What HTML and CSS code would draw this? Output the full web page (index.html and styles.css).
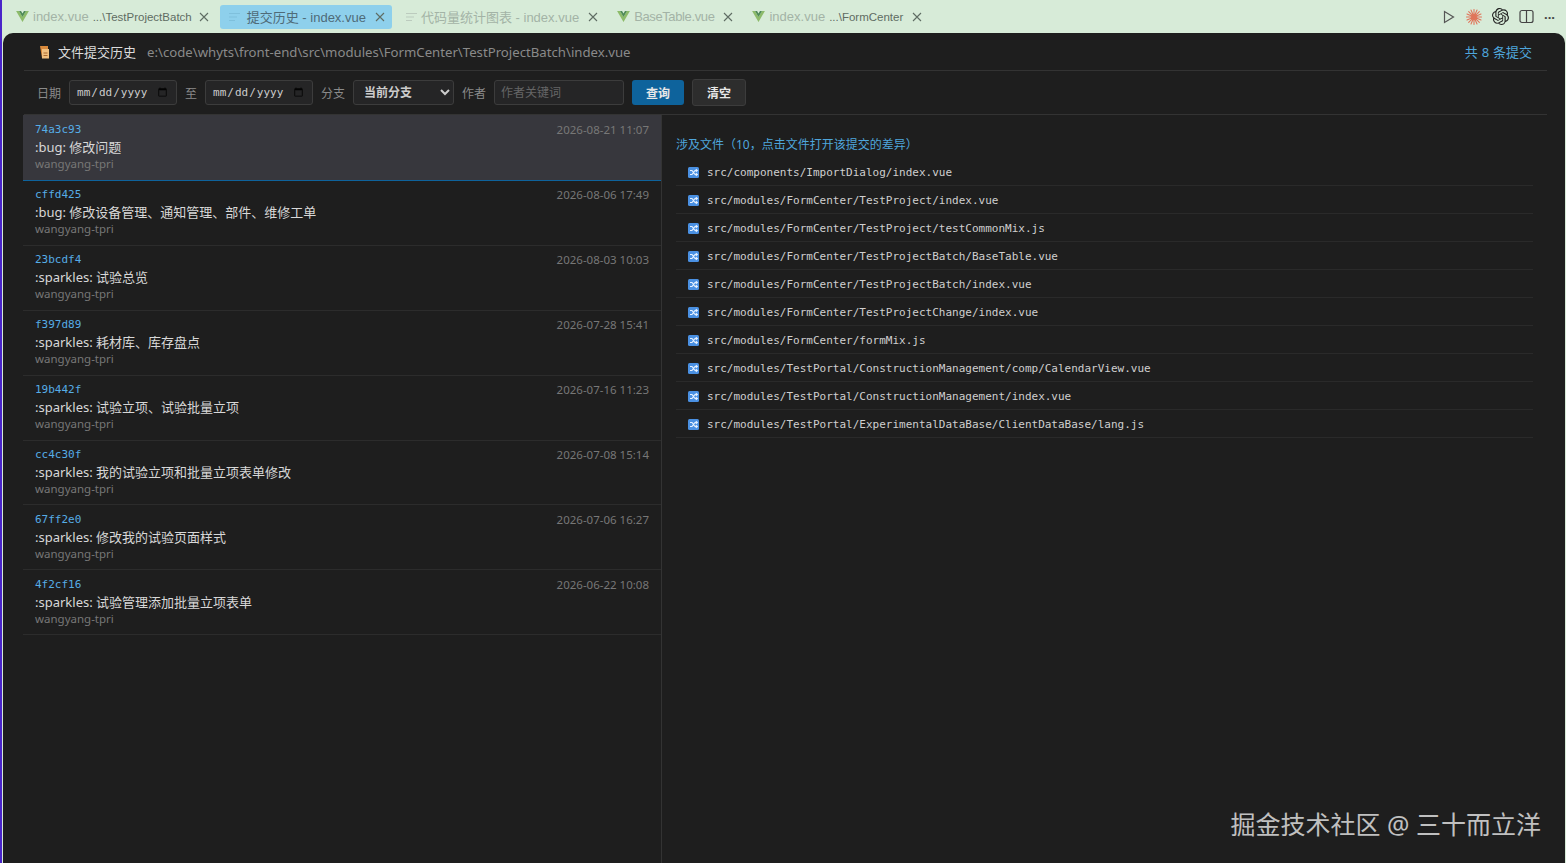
FILE: index.html
```html
<!DOCTYPE html>
<html lang="en">
  <head>
    <title>提交历史 - index.vue</title>
    <link rel="stylesheet" href="styles.css">
  </head>

  <body>
    <!-- shared icons -->
    <svg class="defs" width="0" height="0">
      <symbol id="vue" viewBox="0 0 14 12">
        <path fill="#8dbb6a" d="M0 0h3.200L7 6.600 10.800 0H14L7 12z"/>
        <path fill="#4f8a57" d="M3.200 0h2.200L7 2.800 8.600 0h2.200L7 6.600z"/>
      </symbol>
      <symbol id="close" viewBox="0 0 10 10">
        <path d="M1 1l8 8M9 1l-8 8" stroke="currentColor" stroke-width="1.100" fill="none"/>
      </symbol>
      <symbol id="lines" viewBox="0 0 11 10">
        <path d="M0 1.500h11M0 5h8M0 8.500h6" stroke="currentColor" stroke-width="1.200"/>
      </symbol>
      <symbol id="diff" viewBox="0 0 11 11">
        <rect width="11" height="11" rx="1.500" fill="#4a90e2"/>
        <path d="M2 3.500h2l3 4h2M2 7.500h2l3-4h2M7.800 2.300 9.300 3.500 7.800 4.700M7.800 6.300 9.300 7.500 7.800 8.700" fill="none" stroke="#e6f1ff" stroke-width="1.100"/>
      </symbol>
    </svg>

    <!-- Tab bar -->
    <div class="tabbar">
      <div class="tab tab1">
        <svg class="vue"><use href="#vue"/></svg>
        <span class="tabName">index.vue</span><span class="tabPath">...\TestProjectBatch</span>
        <svg class="close"><use href="#close"/></svg>
      </div>
      <div class="tab active">
        <svg class="lines"><use href="#lines"/></svg>
        <span class="tabName">提交历史 - index.vue</span>
        <svg class="close"><use href="#close"/></svg>
      </div>
      <div class="tab tab3">
        <svg class="lines"><use href="#lines"/></svg>
        <span class="tabName">代码量统计图表 - index.vue</span>
        <svg class="close"><use href="#close"/></svg>
      </div>
      <div class="tab tab4">
        <svg class="vue"><use href="#vue"/></svg>
        <span class="tabName tight">BaseTable.vue</span>
        <svg class="close"><use href="#close"/></svg>
      </div>
      <div class="tab tab5">
        <svg class="vue"><use href="#vue"/></svg>
        <span class="tabName">index.vue</span><span class="tabPath">...\FormCenter</span>
        <svg class="close"><use href="#close"/></svg>
      </div>

      <div class="actions">
        <svg width="14" height="14" viewBox="0 0 14 14"><path d="M2.500 1.500v11l9-5.500z" fill="none" stroke="#555" stroke-width="1.200"/></svg>
        <svg width="16" height="16" viewBox="0 0 16 16"><circle cx="8" cy="8" r="2.500" fill="#e0755a"/><g stroke="#e0755a" stroke-width="1.100" stroke-linecap="round"><path d="M8 .5v15M.5 8h15M2.700 2.700l10.600 10.600M13.300 2.700 2.700 13.300M5 1l6 14M11 1 5 15M1 5l14 6M15 5 1 11"/></g></svg>
        <svg width="17" height="17" viewBox="0 0 24 24"><path fill="#222" d="M22.2819 9.8211a5.9847 5.9847 0 0 0-.5157-4.9108 6.0462 6.0462 0 0 0-6.5098-2.9A6.0651 6.0651 0 0 0 4.9807 4.1818a5.9847 5.9847 0 0 0-3.9977 2.9 6.0462 6.0462 0 0 0 .7427 7.0966 5.98 5.98 0 0 0 .511 4.9107 6.051 6.051 0 0 0 6.5146 2.9001A5.9847 5.9847 0 0 0 13.2599 24a6.0557 6.0557 0 0 0 5.7718-4.2058 5.9894 5.9894 0 0 0 3.9977-2.9001 6.0557 6.0557 0 0 0-.7475-7.0729zm-9.022 12.6081a4.4755 4.4755 0 0 1-2.8764-1.0408l.1419-.0804 4.7783-2.7582a.7948.7948 0 0 0 .3927-.6813v-6.7369l2.02 1.1686a.071.071 0 0 1 .038.052v5.5826a4.504 4.504 0 0 1-4.4945 4.4944zm-9.6607-4.1254a4.4708 4.4708 0 0 1-.5346-3.0137l.142.0852 4.783 2.7582a.7712.7712 0 0 0 .7806 0l5.8428-3.3685v2.3324a.0804.0804 0 0 1-.0332.0615L9.74 19.9502a4.4992 4.4992 0 0 1-6.1408-1.6464zM2.3408 7.8956a4.485 4.485 0 0 1 2.3655-1.9728V11.6a.7664.7664 0 0 0 .3879.6765l5.8144 3.3543-2.0201 1.1685a.0757.0757 0 0 1-.071 0l-4.8303-2.7865A4.504 4.504 0 0 1 2.3408 7.872zm16.5963 3.8558L13.1038 8.364 15.1192 7.2a.0757.0757 0 0 1 .071 0l4.8303 2.7913a4.4944 4.4944 0 0 1-.6765 8.1042v-5.6772a.79.79 0 0 0-.407-.667zm2.0107-3.0231l-.142-.0852-4.7735-2.7818a.7759.7759 0 0 0-.7854 0L9.409 9.2297V6.8974a.0662.0662 0 0 1 .0284-.0615l4.8303-2.7866a4.4992 4.4992 0 0 1 6.6802 4.66zM8.3065 12.863l-2.02-1.1638a.0804.0804 0 0 1-.038-.0567V6.0742a4.4992 4.4992 0 0 1 7.3757-3.4537l-.142.0805L8.704 5.459a.7948.7948 0 0 0-.3927.6813zm1.0976-2.3654l2.602-1.4998 2.6069 1.4998v2.9994l-2.5974 1.4997-2.6067-1.4997Z"/></svg>
        <svg width="15" height="15" viewBox="0 0 15 15"><rect x="1" y="1.500" width="13" height="12" rx="2" fill="none" stroke="#444" stroke-width="1.200"/><path d="M7.500 1.500v12" stroke="#444" stroke-width="1.200"/></svg>
        <span class="more">···</span>
      </div>
    </div>

    <div class="panel">
      <div class="head">
        <svg class="scroll" width="12" height="14" viewBox="0 0 12 14"><path fill="#d98a3c" d="M1 1h8v12H3z"/><path fill="#f0c080" d="M3 4h7v9.500H3z"/><path d="M4.500 8h4M4.500 10.500h4" stroke="#a8682f"/></svg>
        <span class="title">文件提交历史</span>
        <span class="path">e:\code\whyts\front-end\src\modules\FormCenter\TestProjectBatch\index.vue</span>
        <span class="count">共 8 条提交</span>
      </div>

      <div class="filters">
        <label class="lab">日期</label>
        <input class="input dateField" type="date">
        <label class="lab">至</label>
        <input class="input dateField" type="date">
        <label class="lab">分支</label>
        <select class="input branch"><option>当前分支</option></select>
        <label class="lab">作者</label>
        <input class="input author" type="text" placeholder="作者关键词">
        <button class="btn primary">查询</button>
        <button class="btn">清空</button>
      </div>

      <div class="content">
        <div class="commits">
          <div class="commit selected">
            <div class="rowTop"><span class="hash">74a3c93</span><span class="time">2026-08-21 11:07</span></div>
            <div class="msg">:bug: 修改问题</div>
            <div class="who">wangyang-tpri</div>
          </div>
          <div class="commit">
            <div class="rowTop"><span class="hash">cffd425</span><span class="time">2026-08-06 17:49</span></div>
            <div class="msg">:bug: 修改设备管理、通知管理、部件、维修工单</div>
            <div class="who">wangyang-tpri</div>
          </div>
          <div class="commit">
            <div class="rowTop"><span class="hash">23bcdf4</span><span class="time">2026-08-03 10:03</span></div>
            <div class="msg">:sparkles: 试验总览</div>
            <div class="who">wangyang-tpri</div>
          </div>
          <div class="commit">
            <div class="rowTop"><span class="hash">f397d89</span><span class="time">2026-07-28 15:41</span></div>
            <div class="msg">:sparkles: 耗材库、库存盘点</div>
            <div class="who">wangyang-tpri</div>
          </div>
          <div class="commit">
            <div class="rowTop"><span class="hash">19b442f</span><span class="time">2026-07-16 11:23</span></div>
            <div class="msg">:sparkles: 试验立项、试验批量立项</div>
            <div class="who">wangyang-tpri</div>
          </div>
          <div class="commit">
            <div class="rowTop"><span class="hash">cc4c30f</span><span class="time">2026-07-08 15:14</span></div>
            <div class="msg">:sparkles: 我的试验立项和批量立项表单修改</div>
            <div class="who">wangyang-tpri</div>
          </div>
          <div class="commit">
            <div class="rowTop"><span class="hash">67ff2e0</span><span class="time">2026-07-06 16:27</span></div>
            <div class="msg">:sparkles: 修改我的试验页面样式</div>
            <div class="who">wangyang-tpri</div>
          </div>
          <div class="commit">
            <div class="rowTop"><span class="hash">4f2cf16</span><span class="time">2026-06-22 10:08</span></div>
            <div class="msg">:sparkles: 试验管理添加批量立项表单</div>
            <div class="who">wangyang-tpri</div>
          </div>
        </div>

        <div class="files">
          <div class="filesTitle">涉及文件（10，点击文件打开该提交的差异）</div>
          <div class="file"><svg class="diffIcon"><use href="#diff"/></svg>src/components/ImportDialog/index.vue</div>
          <div class="file"><svg class="diffIcon"><use href="#diff"/></svg>src/modules/FormCenter/TestProject/index.vue</div>
          <div class="file"><svg class="diffIcon"><use href="#diff"/></svg>src/modules/FormCenter/TestProject/testCommonMix.js</div>
          <div class="file"><svg class="diffIcon"><use href="#diff"/></svg>src/modules/FormCenter/TestProjectBatch/BaseTable.vue</div>
          <div class="file"><svg class="diffIcon"><use href="#diff"/></svg>src/modules/FormCenter/TestProjectBatch/index.vue</div>
          <div class="file"><svg class="diffIcon"><use href="#diff"/></svg>src/modules/FormCenter/TestProjectChange/index.vue</div>
          <div class="file"><svg class="diffIcon"><use href="#diff"/></svg>src/modules/FormCenter/formMix.js</div>
          <div class="file"><svg class="diffIcon"><use href="#diff"/></svg>src/modules/TestPortal/ConstructionManagement/comp/CalendarView.vue</div>
          <div class="file"><svg class="diffIcon"><use href="#diff"/></svg>src/modules/TestPortal/ConstructionManagement/index.vue</div>
          <div class="file"><svg class="diffIcon"><use href="#diff"/></svg>src/modules/TestPortal/ExperimentalDataBase/ClientDataBase/lang.js</div>
        </div>
      </div>

      <div class="watermark">掘金技术社区 @ 三十而立洋</div>
    </div>
  </body>
</html>
```

FILE: styles.css
```css
html, body {
  height: 100%;
}
body {
  margin: 0;
  display: flex;
  flex-flow: column;
  overflow: hidden;
  box-sizing: border-box;
  border-left: 2px solid #4a25c9;
  background: #d7ebd8;
  font-family: "Noto Sans", "Noto Sans CJK SC", sans-serif;
  font-size: 13px;
}
.defs {
  position: absolute;
}

/* tabs */
.tabbar {
  display: flex;
  align-items: center;
  flex: none;
  height: 33px;
  padding-left: 14px;
  color: #a3b3a6;
}
.tab {
  display: flex;
  align-items: center;
  flex: none;
  height: 24px;
  font-family: "Liberation Sans", "Noto Sans CJK SC", sans-serif;
  font-size: 13px;
  white-space: nowrap;
  color: #a3b3a6;
}
.tab1 { margin-right: 11px; }
.tab1 .close { margin-left: 7px; }
.tab3 { margin-left: 14px; }
.tab4 { margin-left: 19px; }
.tab5 { margin-left: 19px; }
.active {
  padding: 0 7px 0 9px;
  border-radius: 3px;
  background: #8ed0ec;
  color: #4f6b78;
}
.vue {
  width: 13px;
  height: 11px;
  margin-right: 4px;
}
.lines {
  width: 11px;
  height: 10px;
  margin-right: 4px;
  color: #bccbbe;
}
.active .lines {
  margin-right: 7px;
  color: #7fc0dc;
}
.tabPath {
  margin-left: 4px;
  font-size: 11.5px;
  color: #5f6c63;
}
.tight {
  letter-spacing: -0.38px;
}
.close {
  width: 10px;
  height: 10px;
  margin-left: 9px;
  color: #5f6c63;
}
.actions {
  display: flex;
  align-items: center;
  gap: 10px;
  margin-left: auto;
  margin-right: 11px;
}
.more {
  color: #444;
  font-size: 13px;
  font-weight: bold;
}

/* main panel */
.panel {
  position: relative;
  flex: 1;
  display: flex;
  flex-flow: column;
  min-height: 0;
  margin: 0 1px;
  padding: 0 18px 0 21px;
  border-radius: 10px 10px 0 0;
  background: #1e1e1e;
  color: #ccc;
}
.head {
  display: flex;
  align-items: center;
  flex: none;
  height: 37px;
  padding: 0 15px;
  border-bottom: 1px solid #333;
}
.scroll {
  margin-right: 7px;
}
.title {
  margin-right: 11px;
  font-size: 13px;
  color: #dcdcdc;
}
.path {
  font-size: 13.2px;
  color: #8a8a8a;
}
.count {
  margin-left: auto;
  word-spacing: 0.5px;
  color: #4fa6dc;
}

.filters {
  display: flex;
  align-items: center;
  gap: 8px;
  flex: none;
  height: 43px;
  padding: 0 13px;
  border-bottom: 1px solid #333;
  font-size: 12px;
}
.lab {
  color: #8a8a8a;
}
.input {
  box-sizing: border-box;
  height: 25px;
  padding: 0 6px;
  border: 1px solid #3c3c3c;
  border-radius: 3px;
  background: #252526;
  color: #ccc;
  font-size: 12px;
}
.dateField {
  width: 108px;
  font-family: "DejaVu Sans Mono", monospace;
  font-size: 11px;
}
.dateField::-webkit-calendar-picker-indicator {
  opacity: 0.9;
}
.branch {
  width: 101px;
  padding-left: 6px;
  color-scheme: dark;
  font-family: inherit;
  font-weight: bold;
}
.author {
  width: 130px;
  font-family: inherit;
}
.author::placeholder {
  color: #666;
}
.btn {
  box-sizing: border-box;
  width: 54px;
  height: 27px;
  border: 1px solid #3c3c3c;
  border-radius: 3px;
  background: #2d2d2d;
  color: #e8e8e8;
  font-family: inherit;
  font-size: 12px;
  font-weight: bold;
}
.primary {
  width: 52px;
  height: 25px;
  border: 0;
  background: #0e639c;
}

/* commits */
.content {
  flex: 1;
  display: flex;
  min-height: 0;
}
.commits {
  flex: none;
  width: 638px;
  margin-left: -1px;
  border-right: 1px solid #333;
}
.commit {
  box-sizing: border-box;
  height: 64.9px;
  padding: 7.3px 12px 0;
  border-bottom: 1px solid #2c2c2c;
}
.selected {
  height: 66px;
  padding-top: 8px;
  border-bottom: 1px solid #0e639c;
  background: #37373d;
}
.rowTop {
  display: flex;
  justify-content: space-between;
  height: 14px;
  line-height: 14px;
}
.hash {
  font-family: "DejaVu Sans Mono", monospace;
  font-size: 11px;
  color: #56ade6;
}
.time {
  font-size: 11.5px;
  color: #777;
}
.msg {
  height: 20px;
  line-height: 20px;
  font-size: 13px;
  color: #d8d8d8;
}
.who {
  line-height: 14px;
  font-size: 11.5px;
  color: #777;
}

/* changed files */
.files {
  flex: 1;
  padding: 0 14px 0 14px;
}
.filesTitle {
  box-sizing: border-box;
  height: 43px;
  padding-top: 21px;
  line-height: 18px;
  font-size: 12px;
  color: #4fa6dc;
}
.file {
  display: flex;
  align-items: center;
  box-sizing: border-box;
  height: 28px;
  padding: 2px 0 0 12px;
  border-bottom: 1px solid #2a2a2a;
  font-family: "DejaVu Sans Mono", monospace;
  font-size: 11px;
  color: #cfcfcf;
}
.diffIcon {
  width: 11px;
  height: 11px;
  margin-right: 8px;
}
.watermark {
  position: absolute;
  right: 24px;
  bottom: 22px;
  font-size: 25px;
  color: #c0c0c0;
}
```
